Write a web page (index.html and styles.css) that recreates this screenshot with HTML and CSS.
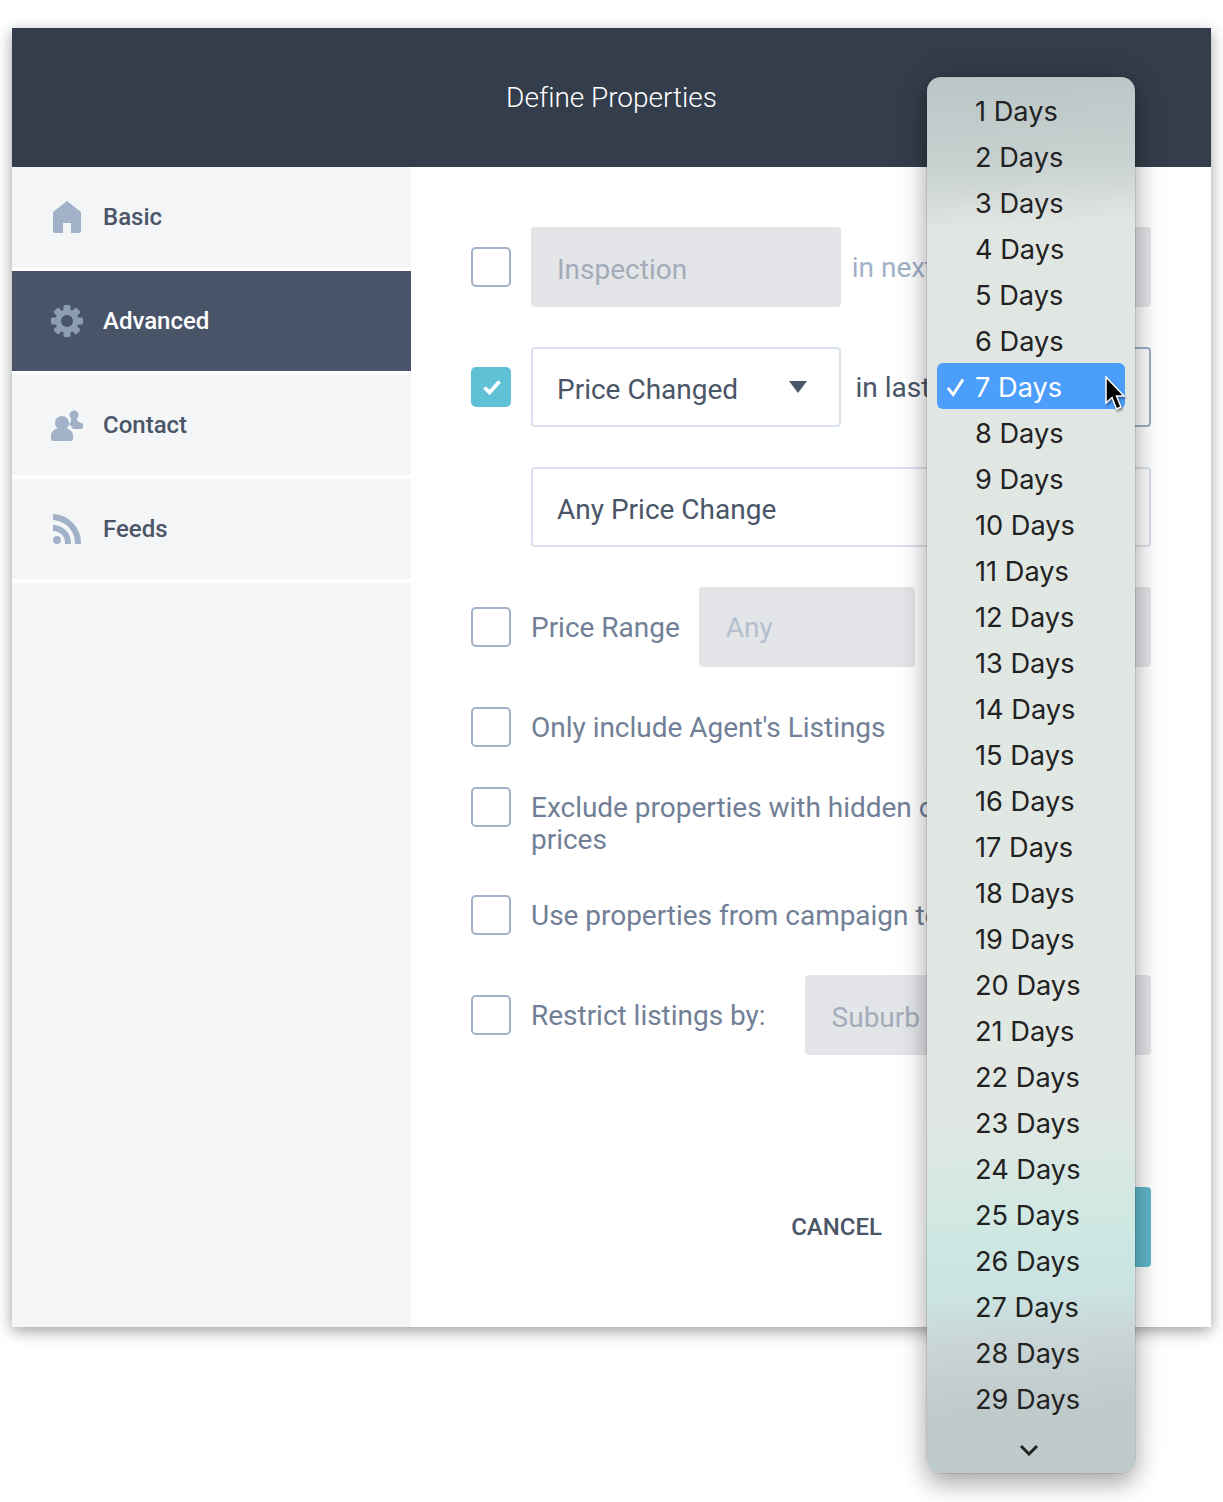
FILE: index.html
```html
<!DOCTYPE html>
<html lang="en">
<head>
<meta charset="utf-8">
<title>Define Properties</title>
<link rel="stylesheet" href="styles.css">
</head>
<body>
<div class="modal">
  <header class="modal-head">Define Properties</header>
  <div class="modal-body">
    <nav class="side">
      <a class="side-item">
        <svg class="side-icon" viewBox="0 0 32 32"><path d="M16 0 30 11V30a2 2 0 0 1-2 2H20V22H12V32H4a2 2 0 0 1-2-2V11Z"/></svg>
        Basic
      </a>
      <a class="side-item active">
        <svg class="side-icon" viewBox="0 0 32 32">
          <g><rect x="12.5" y="0" width="7" height="32" rx="1.5"/><rect x="12.5" y="0" width="7" height="32" rx="1.5" transform="rotate(45 16 16)"/><rect x="12.5" y="0" width="7" height="32" rx="1.5" transform="rotate(90 16 16)"/><rect x="12.5" y="0" width="7" height="32" rx="1.5" transform="rotate(135 16 16)"/></g>
          <circle cx="16" cy="16" r="11.5"/><circle class="gear-hole" cx="16" cy="16" r="6"/>
        </svg>
        Advanced
      </a>
      <a class="side-item">
        <svg class="side-icon" viewBox="0 0 32 32"><circle cx="23" cy="6" r="4.500"/><path d="M20.500 8h5l.5 3q1 2 6 3.500V18a2 2 0 0 1-2 2H22q-1-3-4-4.500 2.500-3 2.500-7.500Z"/><circle cx="11" cy="14" r="7"/><path d="M0 26q0-4 6-6.500 5 2 10 0 6 2.500 6 6.500v4a2 2 0 0 1-2 2H2a2 2 0 0 1-2-2Z"/></svg>
        Contact
      </a>
      <a class="side-item">
        <svg class="side-icon" viewBox="0 0 32 32"><circle cx="6" cy="27" r="4"/><path d="M2 12a18 18 0 0 1 18 19h-6A12 12 0 0 0 2 18Z"/><path d="M2 1a29 29 0 0 1 28 30h-6A23 23 0 0 0 2 7Z"/></svg>
        Feeds
      </a>
    </nav>
    <main class="main">
      <div class="row">
        <span class="check"></span>
        <div class="field disabled wide">Inspection</div>
        <span class="between muted">in next</span>
        <div class="field disabled narrow">7 Days</div>
      </div>
      <div class="row">
        <span class="check on"><svg viewBox="0 0 18 16"><path d="M1.500 8.500 6.500 13.500 16.500 2.500"/></svg></span>
        <div class="field wide">Price Changed<span class="caret"></span></div>
        <span class="between">in last</span>
        <div class="field narrow focus">7 Days</div>
      </div>
      <div class="row indent">
        <div class="field grow">Any Price Change</div>
      </div>
      <div class="row">
        <span class="check"></span>
        <span class="label tight">Price Range</span>
        <div class="field disabled grow faint inset">Any</div>
        <div class="field disabled grow faint inset">Any</div>
      </div>
      <div class="row short">
        <span class="check"></span>
        <span class="label">Only include Agent's Listings</span>
      </div>
      <div class="row short top">
        <span class="check"></span>
        <span class="label para">Exclude properties with hidden or POA listing prices</span>
      </div>
      <div class="row short">
        <span class="check"></span>
        <span class="label">Use properties from campaign template</span>
      </div>
      <div class="row">
        <span class="check"></span>
        <span class="label tight gap-right">Restrict listings by:</span>
        <div class="field disabled grow inset">Suburb</div>
      </div>
      <div class="actions">
        <button class="cancel">CANCEL</button>
        <button class="save">SAVE</button>
      </div>
    </main>
  </div>

  <div class="popup">
    <div class="opt">1 Days</div><div class="opt">2 Days</div><div class="opt">3 Days</div><div class="opt">4 Days</div><div class="opt">5 Days</div><div class="opt">6 Days</div>
    <div class="opt sel"><svg class="tick" viewBox="0 0 20 20"><path d="M2 11 7.500 18 18 2"/></svg>7 Days
      <svg class="cursor" viewBox="0 0 22 36"><path d="M2 1V27L8 21.500 12.500 33 17 31 12.500 20H20Z"/></svg>
    </div>
    <div class="opt">8 Days</div><div class="opt">9 Days</div><div class="opt">10 Days</div><div class="opt">11 Days</div><div class="opt">12 Days</div><div class="opt">13 Days</div><div class="opt">14 Days</div><div class="opt">15 Days</div><div class="opt">16 Days</div><div class="opt">17 Days</div><div class="opt">18 Days</div><div class="opt">19 Days</div><div class="opt">20 Days</div><div class="opt">21 Days</div><div class="opt">22 Days</div><div class="opt">23 Days</div><div class="opt">24 Days</div><div class="opt">25 Days</div><div class="opt">26 Days</div><div class="opt">27 Days</div><div class="opt">28 Days</div><div class="opt">29 Days</div>
    <svg class="more" viewBox="0 0 20 12"><path d="M2 2 10 10 18 2"/></svg>
  </div>
</div>
</body>
</html>
```

FILE: styles.css
```css
* { box-sizing: border-box; }
html, body { margin: 0; background: #fff; }
body { padding: 28px 12px 0; height: 1502px; overflow: hidden; font-family: Roboto, sans-serif; }

.modal {
  position: relative;
  width: 1199px;
  height: 1299px;
  display: flex;
  flex-direction: column;
  background: #fff;
  box-shadow: 0 4px 14px rgba(0, 0, 0, .38);
}
.modal-head {
  height: 139px;
  flex: none;
  display: flex;
  align-items: center;
  justify-content: center;
  background: #343d4b;
  color: #fff;
  font-size: 28px;
  font-weight: 300;
  letter-spacing: -.03px;
}
.modal-body { flex: 1; display: flex; min-height: 0; }

.side {
  width: 399px;
  flex: none;
  display: flex;
  flex-direction: column;
  gap: 4px;
  background: linear-gradient(#f4f5f7, #f4f5f7) 0 416px / 100% 100% no-repeat #fff;
}
.side-item {
  height: 100px;
  display: flex;
  align-items: center;
  gap: 20px;
  padding-left: 39px;
  background: #f4f5f7;
  color: #4a5568;
  font-size: 24px;
  font-weight: 500;
}
.side-item.active { background: #4a5468; color: #fff; }
.side-icon { width: 32px; height: 32px; fill: #a0b1c8; flex: none; }
.active .side-icon { fill: #8c9db3; }
.gear-hole { fill: #4a5468; }

.main { flex: 1; min-width: 0; padding: 60px 60px 60px; display: flex; flex-direction: column; }
.row { display: flex; align-items: center; gap: 20px; min-height: 80px; margin-bottom: 40px; }
.row.short { min-height: 40px; }
.row.top { align-items: flex-start; }
.row.indent { padding-left: 60px; }

.check {
  width: 40px;
  height: 40px;
  flex: none;
  display: flex;
  align-items: center;
  justify-content: center;
  border: 2px solid #a0b1c8;
  border-radius: 5px;
  background: #fff;
}
.check.on { background: #5fc0d6; border-color: #5fc0d6; }
.check svg { width: 18px; height: 16px; margin-left: 2px; fill: none; stroke: #fff; stroke-width: 3.800; }

.field {
  position: relative;
  height: 80px;
  display: flex;
  align-items: center;
  padding: 4px 24px 0;
  border: 2px solid #dae3ec;
  border-radius: 4px;
  background: #fff;
  color: #4a5568;
  font-size: 28px;
  white-space: nowrap;
}
.field.wide { width: 310px; flex: none; }
.field.narrow { width: 200px; flex: none; }
.field.grow { flex: 1; min-width: 0; }
.field.disabled { background: #e3e5e8; border-color: #e3e5e8; color: #a3acb8; }
.field.faint { color: #b4c0d0; padding-top: 0; }
.field.inset { padding-left: 25px; }
.field.focus { border-color: #9db0c9; }
.caret {
  position: absolute;
  right: 32px;
  top: 32px;
  width: 0;
  height: 0;
  border-left: 9px solid transparent;
  border-right: 9px solid transparent;
  border-top: 12px solid #4a5568;
}
.between { flex: 1; margin: 0 -14px 0 -20px; text-align: center; color: #4a5568; font-size: 28px; white-space: nowrap; }
.between.muted { color: #a0b1c8; }
.label { color: #718096; font-size: 28px; white-space: nowrap; letter-spacing: -.02px; }
.label.tight { margin-right: -1px; }
.label.para { white-space: normal; line-height: 32px; flex: 1; min-width: 0; padding-top: 5px; }
.label.gap-right { margin-right: 19px; }

.actions { display: flex; justify-content: flex-end; align-items: center; gap: 79px; margin-top: 92px; }
.cancel, .save { height: 80px; border: 0; font-family: inherit; font-size: 24px; font-weight: 500; }
.cancel { background: none; color: #4a5568; padding: 0; }
.save { width: 190px; border-radius: 4px; background: #60b8cc; color: #fff; }

.popup {
  position: absolute;
  left: 915px;
  top: 49px;
  width: 208px;
  height: 1396px;
  padding: 10px 10px 0;
  border-radius: 14px;
  background: linear-gradient(177deg, #b9c5c5 0%, #c8d1d0 6.500%, #e0e6e2 11%, #e1e7e3 74%, #d0e8e2 82%, #cbe3e2 87%, #c9d5d6 90%, #bfcacb 95%, #bfcacb 100%);
  box-shadow: 0 0 0 .5px rgba(0, 0, 0, .2), 0 10px 24px rgba(0, 0, 0, .32), 0 0 40px rgba(0, 0, 0, .08);
  font-family: Inter, sans-serif;
  color: #222;
  font-size: 27.2px;
}
.opt {
  position: relative;
  height: 46px;
  display: flex;
  align-items: center;
  padding: 2px 0 0 38px;
  border-radius: 6px;
  white-space: nowrap;
}
.opt.sel { background: #4b9efb; color: #fff; }
.tick { position: absolute; left: 9px; top: 14px; width: 19px; height: 20px; fill: none; stroke: #fff; stroke-width: 3; }
.cursor { position: absolute; left: 167px; top: 13px; width: 22px; height: 36px; fill: #000; stroke: #fff; stroke-width: 1.500; filter: drop-shadow(1px 2px 1px rgba(0, 0, 0, .4)); }
.more { display: block; width: 20px; height: 12px; margin: 23px 0 0 82px; fill: none; stroke: #222; stroke-width: 3; }
```
